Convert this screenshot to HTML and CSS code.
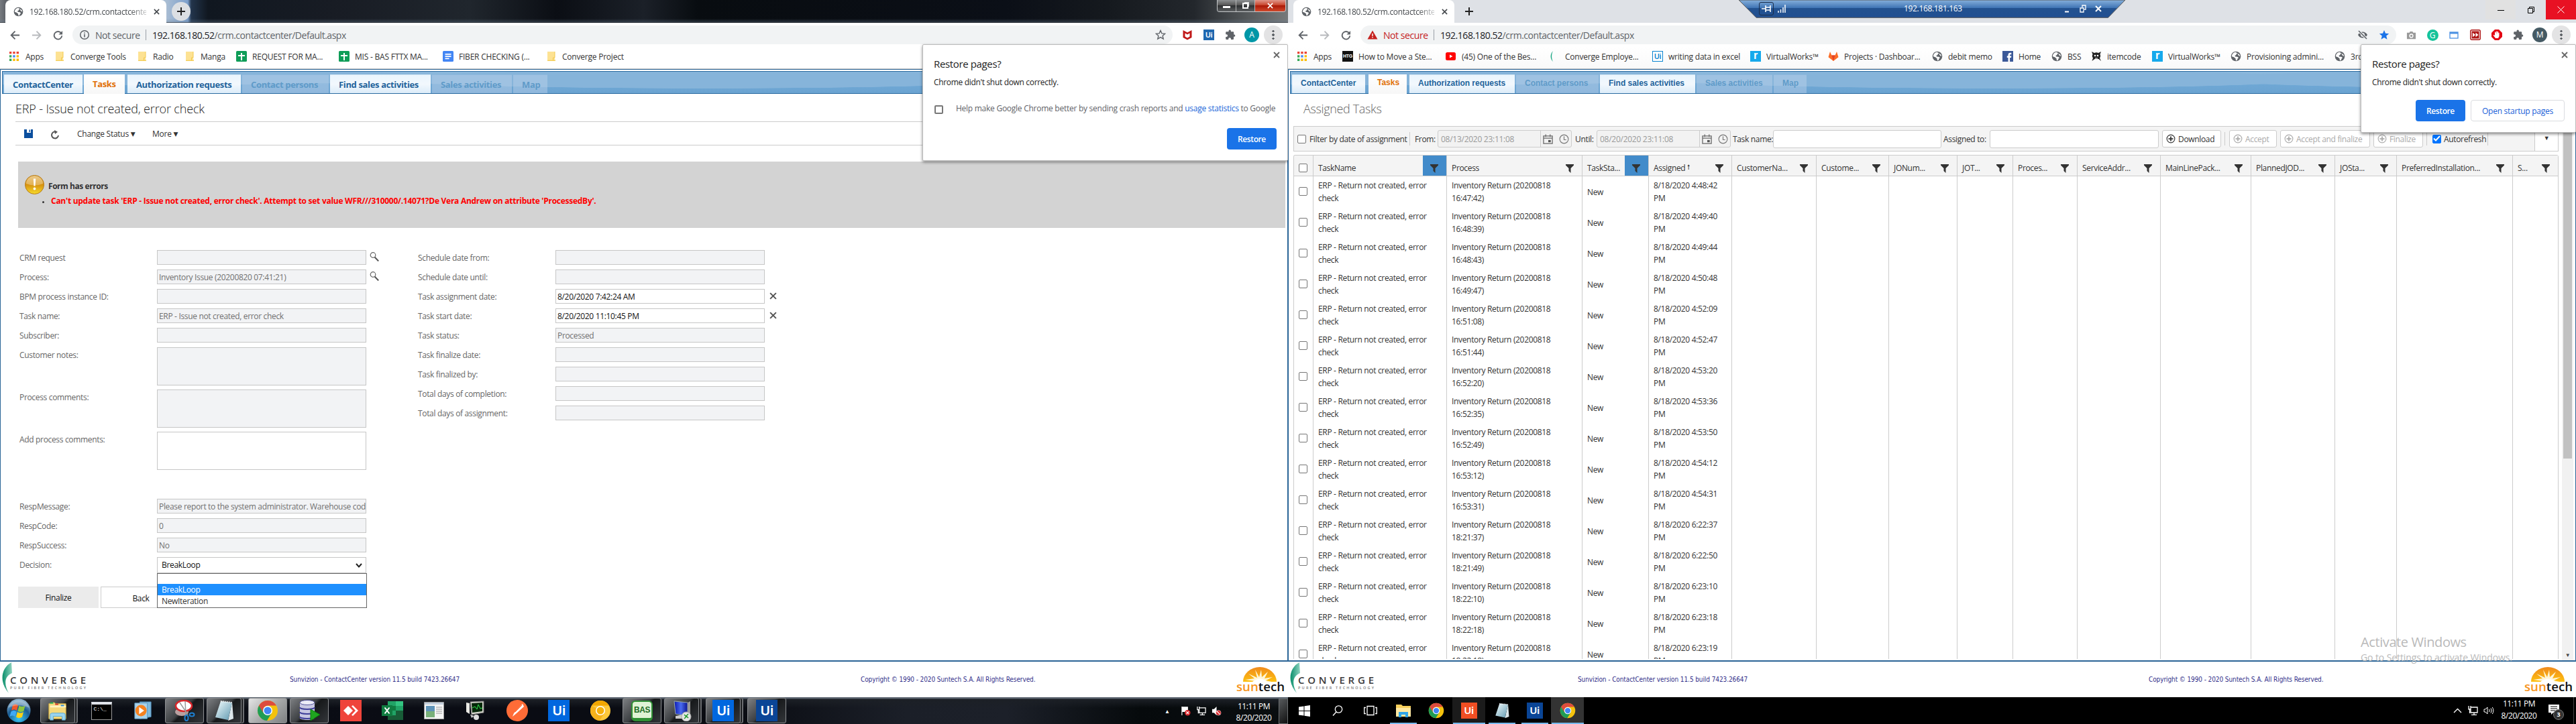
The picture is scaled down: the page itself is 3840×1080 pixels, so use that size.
FILE: index.html
```html
<!DOCTYPE html>
<html lang="en">
<head>
<meta charset="utf-8">
<title>ContactCenter</title>
<link rel="stylesheet" href="styles.css">
</head>
<body>
<svg class="defs" width="0" height="0">
<defs>
<linearGradient id="gsilver" x1="0" y1="0" x2="1" y2="1"><stop offset="0" stop-color="#f4feff"/><stop offset="1" stop-color="#5f98b0"/></linearGradient>
<linearGradient id="gsun" x1="0" y1="0" x2="0" y2="1"><stop offset="0" stop-color="#f08a1c"/><stop offset="1" stop-color="#fdc010"/></linearGradient>
<linearGradient id="gleaf" x1="0" y1="0" x2="1" y2="0"><stop offset="0" stop-color="#0a8f6c"/><stop offset="1" stop-color="#8fd3c0"/></linearGradient>
<radialGradient id="gorb" cx=".5" cy=".85" r=".8"><stop offset="0" stop-color="#37c5f2"/><stop offset=".6" stop-color="#1a5b93"/><stop offset="1" stop-color="#8fb4cf"/></radialGradient>
<linearGradient id="gwarn" x1="0" y1="0" x2="0" y2="1"><stop offset="0" stop-color="#e3b45a"/><stop offset=".5" stop-color="#d7920f"/><stop offset="1" stop-color="#f7dc2c"/></linearGradient>
<linearGradient id="gblue" x1="0" y1="0" x2="1" y2="0"><stop offset="0" stop-color="#0b18b0"/><stop offset=".5" stop-color="#4a6cf0"/><stop offset="1" stop-color="#0a1390"/></linearGradient>
</defs>
<symbol id="globe" viewBox="0 0 16 16"><circle cx="8" cy="8" r="7.3" fill="#5f6368"/><path d="M7.5 1.8C4 2.5 1.900 5 2 8.300l3 .9 2.500 2.100.4 2.700c-.3.400 2 .2 1.900-.3l.6-2 1.600-1.700-1.800-1.300-3-.3-.9-1.500 2-1 .6-1.700 1.600-.6z" fill="#fff"/><path d="M10.500 3.500l3 2.200.5 2.300-1.500-.8-1.500-1.700z" fill="#fff"/></symbol>
<symbol id="back" viewBox="0 0 16 16"><path d="M15 8H2M8 1.800L1.800 8 8 14.200" fill="none" stroke="currentColor" stroke-width="2"/></symbol>
<symbol id="fwd" viewBox="0 0 16 16"><path d="M1 8h13M8 1.800L14.200 8 8 14.200" fill="none" stroke="currentColor" stroke-width="2"/></symbol>
<symbol id="reload" viewBox="0 0 16 16"><path d="M13 4.600A6.200 6.200 0 1 0 14.200 8.800" fill="none" stroke="currentColor" stroke-width="2"/><path d="M15 1v6H9z" fill="currentColor"/></symbol>
<symbol id="info" viewBox="0 0 16 16"><circle cx="8" cy="8" r="6.300" fill="none" stroke="#5f6368" stroke-width="1.500"/><path d="M7.200 7h1.600v4.500H7.200zM7.200 4.400h1.600V6H7.200z" fill="#5f6368"/></symbol>
<symbol id="alert" viewBox="0 0 16 16"><path d="M8 1.500L15.500 14.500H.5z" fill="#c5221f"/><path d="M7.300 6h1.400v4H7.300zM7.300 11h1.400v1.500H7.300z" fill="#fff"/></symbol>
<symbol id="star" viewBox="0 0 16 16"><path d="M8 1.500l1.900 4.400 4.800.4-3.600 3.100 1.100 4.700L8 11.600l-4.200 2.500 1.100-4.700L1.300 6.300l4.800-.4z" fill="none" stroke="#5f6368" stroke-width="1.400"/></symbol>
<symbol id="starf" viewBox="0 0 16 16"><path d="M8 1l2 4.800 5.200.4-4 3.400 1.300 5.100L8 12l-4.500 2.700 1.300-5.100-4-3.400L6 5.800z" fill="#1a73e8"/></symbol>
<symbol id="eye" viewBox="0 0 16 16"><path d="M1 8c3-6 11-6 14 0-3 6-11 6-14 0z" fill="#5f6368"/><circle cx="8" cy="8" r="3" fill="#f1f3f4"/><circle cx="8" cy="8" r="1.600" fill="#5f6368"/><path d="M2 2l12 12" stroke="#f1f3f4" stroke-width="3.500"/><path d="M2 2l12 12" stroke="#5f6368" stroke-width="1.600"/></symbol>
<symbol id="shield" viewBox="0 0 16 16"><path d="M1.500 1L8 4.500 14.500 1v11L8 15.500 1.500 12z" fill="#c01818"/><path d="M4.500 5.500L8 7.500l3.500-2v5L8 12.500l-3.500-2z" fill="#fff"/></symbol>
<symbol id="puzzle" viewBox="0 0 16 16"><path d="M14 7.500h-.8V4.500c0-.8-.6-1.300-1.300-1.300h-3V2.300a1.700 1.700 0 0 0-3.400 0v.9h-3c-.7 0-1.300.5-1.300 1.300v2.700h1a1.900 1.900 0 0 1 0 3.800h-1v2.800c0 .7.600 1.300 1.300 1.300h2.700v-1a1.900 1.900 0 0 1 3.800 0v1h2.700c.7 0 1.300-.6 1.300-1.300v-3h1a1.700 1.700 0 0 0 0-3.300z" fill="#5f6368"/></symbol>
<symbol id="camera" viewBox="0 0 16 16"><path d="M1 4h4l1-2h4l1 2h4v10H1z" fill="#9a9a9a"/><circle cx="8" cy="9" r="3.300" fill="#fff"/><circle cx="8" cy="9" r="1.800" fill="#9a9a9a"/></symbol>
<symbol id="win" viewBox="0 0 16 16"><rect x="2" y="4" width="12" height="9" fill="#fff" stroke="#4a90e2" stroke-width="1.300"/><path d="M2 4h12v2.500H2z" fill="#4a90e2"/></symbol>
<symbol id="ff" viewBox="0 0 16 16"><rect x=".7" y=".7" width="14.600" height="14.600" rx="2" fill="#fff" stroke="#b01818" stroke-width="1.400"/><rect x="2.500" y="2.500" width="11" height="11" fill="#b01818"/><path d="M4 4.800L8 8l-4 3.200zM8.500 4.800l4 3.200-4 3.200z" fill="#fff"/></symbol>
<symbol id="hand" viewBox="0 0 16 16"><path d="M5 0h6l5 5v6l-5 5H5l-5-5V5z" fill="#e30613"/><path d="M5 5.500V9l-1.300-1-1 .8L6 13h4l1.500-3V5l-1.200-.5L10 7V3H8.800v4L8.300 2.500H7.200V7L6.500 3.500H5.300z" fill="#fff"/></symbol>
<symbol id="apps" viewBox="0 0 14 14"><path d="M0 0h3.300v3.300H0zM5.300 0h3.300v3.300H5.300zM10.600 0H14v3.300h-3.400z" fill="#ea4335"/><path d="M0 5.300h3.300v3.300H0z" fill="#34a853"/><path d="M5.300 5.300h3.300v3.300H5.300z" fill="#4285f4"/><path d="M10.600 5.300H14v3.300h-3.400zM10.600 10.600H14V14h-3.400zM5.300 10.600h3.300V14H5.300z" fill="#fbbc04"/><path d="M0 10.600h3.300V14H0z" fill="#34a853"/></symbol>
<symbol id="folder" viewBox="0 0 12 14"><path d="M0 0h11v10l1 4H0z" fill="#fde293"/><path d="M0 13.300h12M11 0v9H8.500v4" stroke="#f1c644" stroke-width=".9" fill="none"/></symbol>
<symbol id="sheet" viewBox="0 0 16 16"><rect width="16" height="16" rx="1.500" fill="#0f9d58"/><path d="M7 3h2v11H7zM3 6h10v2H3z" fill="#fff"/></symbol>
<symbol id="doc" viewBox="0 0 16 16"><rect width="16" height="16" rx="1.500" fill="#4285f4"/><path d="M3.500 4h9v1.700h-9zM3.500 7.300h9V9h-9zM3.500 10.600h6v1.700h-6z" fill="#fff"/></symbol>
<symbol id="yt" viewBox="0 0 16 16"><rect y="2" width="15" height="12" rx="2.500" fill="#f00"/><path d="M6 5.500L10.500 8 6 10.500z" fill="#fff"/></symbol>
<symbol id="leaf" viewBox="0 0 16 16"><path d="M6 0C2 4 1 11 6 16 3.500 11 3.500 5 6 0z" fill="#1ca884"/></symbol>
<symbol id="gitlab" viewBox="0 0 16 16"><path d="M8 15L.5 9.300 3 1l2.400 5.500h5.200L13 1l2.500 8.300z" fill="#fc6d26"/><path d="M8 15l2.600-8.500H5.400z" fill="#e24329"/></symbol>
<symbol id="fb" viewBox="0 0 16 16"><rect width="16" height="16" fill="#3b5998"/><path d="M8.500 16v-6H6.800V7.500h1.700V6c0-2 1.200-3.200 3-3.200h1.800v2.500H12c-.7 0-.9.4-.9 1v1.200h2.200L13 10h-1.900v6z" fill="#fff"/></symbol>
<symbol id="skull" viewBox="0 0 16 16"><path d="M1 1l4 2c2-1 4-1 6 0l4-2-1.500 4c1 2 .8 4-.5 5.500l2 4.500-3.500-3h-6L1.500 15l1.500-4.500C1.500 9 1.500 7 2.500 5z" fill="#222"/><circle cx="6" cy="7" r="1.300" fill="#fff"/><circle cx="10" cy="7" r="1.300" fill="#fff"/><path d="M6 11h4" stroke="#fff"/></symbol>
<symbol id="cal" viewBox="0 0 16 16"><path d="M1 3h14v12H1zM1 6.500h14M4.500 .5v4M11.500 .5v4" fill="none" stroke="#6a6a6a" stroke-width="1.400"/><path d="M8.500 9.500h4v3.500h-4z" fill="#555"/></symbol>
<symbol id="clock" viewBox="0 0 16 16"><circle cx="8" cy="8" r="6.800" fill="none" stroke="#777" stroke-width="1.200"/><path d="M8 3.500V9h3.500" fill="none" stroke="#777" stroke-width="1.200"/></symbol>
<symbol id="plusc" viewBox="0 0 16 16"><circle cx="8" cy="8" r="6.700" fill="none" stroke="currentColor" stroke-width="1.300"/><path d="M8 4v8M4 8h8" stroke="currentColor" stroke-width="2"/></symbol>
<symbol id="mag" viewBox="0 0 14 14"><circle cx="5" cy="4.500" r="3.800" fill="#fff" stroke="#666" stroke-width="1.200"/><path d="M7.500 7.500l5.700 6" stroke="#555" stroke-width="2"/></symbol>
<symbol id="x" viewBox="0 0 10 10"><path d="M1 1l8 8M9 1L1 9" stroke="currentColor" stroke-width="1.800" fill="none"/></symbol>
<symbol id="chrome" viewBox="0 0 32 32"><circle cx="16" cy="16" r="15" fill="#f4c20d"/><path d="M3 8.500A15 15 0 0 0 15 31l7-11.500-6-3.500z" fill="#1f9d55"/><path d="M3 8.500A15 15 0 0 1 29 8.500H16a8 8 0 0 0-6.700 11z" fill="#dd4b3e"/><circle cx="16" cy="16" r="7" fill="#fff"/><circle cx="16" cy="16" r="5.500" fill="#4285f4"/></symbol>
<symbol id="canary" viewBox="0 0 32 32"><circle cx="16" cy="16" r="15" fill="#fdc83a"/><path d="M3 8.500A15 15 0 0 1 29 8.500H16z" fill="#f2a600"/><path d="M3 8.500A15 15 0 0 0 15 31l7-11.500-6-3.500z" fill="#f6b21b"/><circle cx="16" cy="16" r="7" fill="#fff"/><circle cx="16" cy="16" r="5.500" fill="#f5b00a"/></symbol>
<symbol id="orb" viewBox="0 0 36 36"><circle cx="18" cy="18" r="17.500" fill="url(#gorb)"/><path d="M9 10c3-2 5-2 8 0l-2 8c-3-2-5-2-8 0z" fill="#f0592a"/><path d="M18.500 10.500c3 2 6 2 9 0l-2 8c-3 2-6 2-9 0z" fill="#8cc63f"/><path d="M6.500 19.500c3-2 5-2 8 0l-2 7.500c-3-2-5-2-8 0z" fill="#3fa9f5"/><path d="M16 20c3 2 6 2 9 0l-2 7.500c-3 2-6 2-9 0z" fill="#fcd116"/><path d="M2 14a17 17 0 0 1 32 0C24 9 12 9 2 14z" fill="#fff" opacity=".3"/></symbol>
<symbol id="explorer" viewBox="0 0 34 32"><path d="M3 5l8-2 3 2h16v24H3z" fill="#f5d97b" stroke="#c9a43f"/><path d="M5 8h25v3H5z" fill="#fff4c0"/><path d="M5 3h5v2H5z" fill="#1db954"/><path d="M13 5h5v2h-5z" fill="#d9342b"/><path d="M22 7h5v2h-5z" fill="#2b8fe0"/><path d="M5 31V23q0-3 3-3h18q3 0 3 3v8h-5v-6H10v6z" fill="#9ad4f0" stroke="#5aa7cf"/></symbol>
<symbol id="explorer10" viewBox="0 0 24 24"><path d="M1 3h8l2 2h12v16H1z" fill="#f7cf5b"/><path d="M1 8h22v13H1z" fill="#ffe9a2"/><path d="M5 22v-8h14v8h-4v-4H9v4z" fill="#2fa4e7"/></symbol>
<symbol id="media" viewBox="0 0 30 30"><path d="M10 1h18v24l-18 3z" fill="#7fb9dc" stroke="#4c87b3"/><path d="M2 3h20v25H2z" fill="#a9d2ea" stroke="#5c9cc4"/><circle cx="12" cy="15" r="9" fill="#f58220"/><path d="M9 9.500l8 5.500-8 5.500z" fill="#fff"/></symbol>
<symbol id="snip" viewBox="0 0 32 32"><ellipse cx="12" cy="18" rx="10" ry="6" fill="#b9a0a0"/><ellipse cx="15" cy="9" rx="12" ry="8" fill="#fff" stroke="#d7262b" stroke-width="2.500"/><path d="M9 4l12 18M17 2l1 20" stroke="#999" stroke-width="1.500"/><ellipse cx="27" cy="22" rx="3.500" ry="2.500" fill="none" stroke="#1d7fd1" stroke-width="2"/><ellipse cx="19" cy="27" rx="2.500" ry="4" fill="none" stroke="#1d7fd1" stroke-width="2"/></symbol>
<symbol id="note" viewBox="0 0 30 32"><path d="M27 3l2 25-8 3z" fill="#dce6ea"/><path d="M10 2l17 2-6 26L2 26z" fill="url(#gsilver)"/><path d="M10 2l17 2" stroke="#fff" stroke-width="2" stroke-dasharray="1.500 1.500"/></symbol>
<symbol id="db" viewBox="0 0 32 32"><path d="M2 4v23c0 4 22 4 22 0V4z" fill="#c7c7e2"/><ellipse cx="13" cy="4" rx="11" ry="3.500" fill="#ececf8" stroke="#55559c"/><path d="M2 11c0 4 22 4 22 0M2 18c0 4 22 4 22 0M2 25c0 4 22 4 22 0" stroke="#3e3e99" stroke-width="2" fill="none"/><path d="M18 14l14 8-14 9z" fill="#1fa51f" stroke="#0a7a0a"/></symbol>
<symbol id="anydesk" viewBox="0 0 32 32"><path d="M0 0h32v32H0z" fill="#ef443b"/><path d="M12 9l7 7-7 7-7-7z" fill="#fff"/><path d="M17 9.500l2-1.500 8 8-8 8-2-1.500 6-6.500z" fill="#fff"/></symbol>
<symbol id="excel" viewBox="0 0 32 28"><path d="M9 0h23v28H9z" fill="#21a366"/><path d="M9 7h12v7H9z" fill="#107c41"/><path d="M21 0h11v7H21z" fill="#33c481"/><path d="M9 21h23v7H9zM21 14h11v7H21z" fill="#185c37"/><rect y="6" width="16" height="16" fill="#107c41"/><path d="M4.500 9.500l7 9M11.500 9.500l-7 9" stroke="#fff" stroke-width="2"/></symbol>
<symbol id="appwin" viewBox="0 0 30 26"><path d="M.5.500h29v25H.5z" fill="#f4f4f4" stroke="#999"/><path d="M1 1h28v3H1z" fill="#c3cfdd"/><path d="M3 6h13v17H3z" fill="#5f93b8"/><path d="M3 14h13v9H3z" fill="#79b07a"/><path d="M18 8h9M18 11h9M18 14h9M18 17h9" stroke="#999"/></symbol>
<symbol id="mon" viewBox="0 0 32 30"><path d="M8 2l20-1v17l-18 3z" fill="#d9d9d0" stroke="#777"/><path d="M10 4l16-1v13l-15 2z" fill="#06280a"/><path d="M11 11l4-2 3 4 2-7 3 6 3-1" stroke="#2fe04a" fill="none"/><path d="M2 3l5 1v16l-5-3z" fill="#e9e9e4"/><circle cx="17" cy="25" r="4" fill="#ddd"/><path d="M8 21l6 2-4 3z" fill="#ccc"/></symbol>
<symbol id="postman" viewBox="0 0 32 32"><circle cx="16" cy="16" r="16" fill="#ff6c37"/><path d="M24 6l2 4-11 10-6 5 2-5z" fill="#fff"/><path d="M13 18L23 8" stroke="#ff6c37"/></symbol>
<symbol id="rdp" viewBox="0 0 30 32"><path d="M4 2l20 2v20L6 21z" fill="url(#gblue)" stroke="#9aa"/><path d="M24 4l4-2v19l-4 3z" fill="#999"/><path d="M6 24l10-2v6H6z" fill="#ccc"/><circle cx="22" cy="25" r="7" fill="#e5e5e5" stroke="#aaa"/><path d="M19 22l3 3-3 3M25 21l-3 3 3 3" stroke="#1d9b2c" stroke-width="1.500" fill="none"/></symbol>
<symbol id="flag" viewBox="0 0 16 16"><path d="M2 1v14M3 2h8v7H3z" stroke="#fff" stroke-width="1.200" fill="#fff"/><circle cx="11" cy="11" r="4.500" fill="#d9262b"/><path d="M9 9l4 4M13 9l-4 4" stroke="#fff" stroke-width="1.300"/></symbol>
<symbol id="net" viewBox="0 0 16 16"><path d="M5 3h10v8H5zM10 11v3M6 14.300h8M2 1v5h3V1M3.500 6v6" fill="none" stroke="#fff" stroke-width="1.300"/></symbol>
<symbol id="mute" viewBox="0 0 16 16"><path d="M1 5h3l4-4v14l-4-4H1z" fill="#fff"/><circle cx="11" cy="11" r="4" fill="#d9262b" stroke="#fff" stroke-width=".5"/><path d="M8.500 8.500l5 5" stroke="#fff" stroke-width="1.300"/></symbol>
<symbol id="sound" viewBox="0 0 16 16"><path d="M1 6h2l3-3v10l-3-3H1zM8.500 6q1.500 2 0 4M11 4.500q2.500 3.500 0 7M13.300 3q3.200 5 0 10" fill="none" stroke="#fff" stroke-width="1"/></symbol>
</svg>

<main class="desktops">

<section class="desktop left">
  <div class="strip dark">
    <div class="ctab"><svg class="i15"><use href="#globe"/></svg><span class="ctitle">192.168.180.52/crm.contactcente</span><svg class="i9 cx"><use href="#x"/></svg></div>
    <div class="plus round"><svg class="i14" viewBox="0 0 14 14"><path d="M7 1v12M1 7h12" stroke="#222" stroke-width="2"/></svg></div>
    <div class="aero"><i class="mn"><b></b></i><i class="rs"><b></b></i><i class="cl"><svg class="i9"><use href="#x"/></svg></i></div>
  </div>
  <div class="toolbar">
    <span class="tb"><svg class="i15"><use href="#back"/></svg></span><span class="tb dim"><svg class="i15"><use href="#fwd"/></svg></span><span class="tb"><svg class="i15"><use href="#reload"/></svg></span>
    <div class="omni"><svg class="i16"><use href="#info"/></svg><span class="sec">Not secure</span><i class="osep"></i><span class="url"><b>192.168.180.52</b>/crm.contactcenter/Default.aspx</span><span class="oic"><svg class="i16"><use href="#star"/></svg></span></div>
    <span class="tb"><svg class="i16"><use href="#shield"/></svg></span><span class="tb"><i class="ui sm">Ui</i></span><span class="tb"><svg class="i16"><use href="#puzzle"/></svg></span><span class="tb"><i class="av teal">A</i></span><span class="tb"><i class="dots"></i></span>
  </div>
  <div class="marks marks-l">
    <span><svg class="i14"><use href="#apps"/></svg>Apps</span>
    <span><svg class="fold"><use href="#folder"/></svg>Converge Tools</span>
    <span><svg class="fold"><use href="#folder"/></svg>Radio</span>
    <span><svg class="fold"><use href="#folder"/></svg>Manga</span>
    <span><svg class="i16"><use href="#sheet"/></svg>REQUEST FOR MA...</span>
    <span><svg class="i16"><use href="#sheet"/></svg>MIS - BAS FTTX MA...</span>
    <span><svg class="i16"><use href="#doc"/></svg>FIBER CHECKING (...</span>
    <span><svg class="fold"><use href="#folder"/></svg>Converge Project</span>
  </div>

  <div class="frame">
    <nav class="band band-l">
      <a>ContactCenter</a><a class="on">Tasks</a><a>Authorization requests</a><a class="off">Contact persons</a><a>Find sales activities</a><a class="off">Sales activities</a><a class="off">Map</a>
    </nav>
    <div class="content">
      <h1 class="ruled">ERP - Issue not created, error check</h1>
      <div class="actions">
        <svg width="13" height="13" viewBox="0 0 13 13"><path d="M0 0h13v13H0z" fill="#0b4f9e"/><path d="M4 0h6v5H4z" fill="#fff"/><path d="M7.500 .5h1.500v3.500H7.500z" fill="#0b4f9e"/></svg>
        <svg class="rel" width="14" height="14" viewBox="0 0 14 14"><path d="M8 2.500A5 5 0 1 0 12 8" fill="none" stroke="#555" stroke-width="2"/><path d="M6 0l5 2.700L7 6z" fill="#555"/></svg>
        <span class="cs">Change Status <b>▼</b></span><span>More <b>▼</b></span>
      </div>
      <div class="errors">
        <div class="ehead"><svg width="29" height="29" viewBox="0 0 29 29"><circle cx="14.500" cy="14.500" r="14" fill="url(#gwarn)" stroke="#b57a18"/><path d="M2 13a12.500 11.500 0 0 1 25 0q-12 5-25 0z" fill="#fff" opacity=".3"/><path d="M12.800 5.500h3.400l-.7 11h-2z" fill="#fff"/><circle cx="14.500" cy="20.500" r="1.900" fill="#fff"/></svg><b>Form has errors</b></div>
        <ul><li>Can't update task 'ERP - Issue not created, error check'. Attempt to set value WFR///310000/.14071?De Vera Andrew on attribute 'ProcessedBy'.</li></ul>
      </div>
      <div class="form">
        <div class="col">
          <div class="fr"><label>CRM request</label><div class="in"></div><svg class="mag"><use href="#mag"/></svg></div>
          <div class="fr"><label>Process:</label><div class="in">Inventory Issue (20200820 07:41:21)</div><svg class="mag"><use href="#mag"/></svg></div>
          <div class="fr"><label>BPM process instance ID:</label><div class="in"></div></div>
          <div class="fr"><label>Task name:</label><div class="in">ERP - Issue not created, error check</div></div>
          <div class="fr"><label>Subscriber:</label><div class="in"></div></div>
          <div class="fr tall"><label>Customer notes:</label><div class="in"></div></div>
          <div class="fr tall"><label>Process comments:</label><div class="in"></div></div>
          <div class="fr tall last"><label>Add process comments:</label><div class="in w"></div></div>
          <div class="fr"><label>RespMessage:</label><div class="in">Please report to the system administrator. Warehouse cod</div></div>
          <div class="fr"><label>RespCode:</label><div class="in">0</div></div>
          <div class="fr"><label>RespSuccess:</label><div class="in">No</div></div>
          <div class="fr sel"><label>Decision:</label><div class="in w select">BreakLoop<svg width="10" height="7" viewBox="0 0 10 7"><path d="M1 1l4 4.500L9 1" fill="none" stroke="#222" stroke-width="2"/></svg>
            <div class="drop"><p></p><p class="hi">BreakLoop</p><p>NewIteration</p></div></div></div>
          <div class="btns"><span class="fin">Finalize</span><span class="bk">Back</span></div>
        </div>
        <div class="col">
          <div class="fr"><label>Schedule date from:</label><div class="in"></div></div>
          <div class="fr"><label>Schedule date until:</label><div class="in"></div></div>
          <div class="fr"><label>Task assignment date:</label><div class="in w">8/20/2020 7:42:24 AM</div><svg class="del"><use href="#x"/></svg></div>
          <div class="fr"><label>Task start date:</label><div class="in w">8/20/2020 11:10:45 PM</div><svg class="del"><use href="#x"/></svg></div>
          <div class="fr"><label>Task status:</label><div class="in">Processed</div></div>
          <div class="fr"><label>Task finalize date:</label><div class="in"></div></div>
          <div class="fr"><label>Task finalized by:</label><div class="in"></div></div>
          <div class="fr"><label>Total days of completion:</label><div class="in"></div></div>
          <div class="fr"><label>Total days of assignment:</label><div class="in"></div></div>
        </div>
      </div>
    </div>
  </div>

  <footer><svg class="conv" viewBox="0 0 130 50"><path d="M16 1C1 9-3 30 12 47 5 34 5 22 17 17z" fill="url(#gleaf)"/><text x="14" y="33" class="lg1" textLength="113">CONVERGE</text><text x="14" y="41" class="lg2" textLength="113">PURE FIBER TECHNOLOGY</text></svg><span class="f1">Sunvizion - ContactCenter version 11.5 build 7423.26647</span><span class="f2">Copyright © 1990 - 2020 Suntech S.A. All Rights Reserved.</span><svg class="sun" viewBox="0 0 74 42"><path d="M11 23a25 22 0 0 1 50 0z" fill="url(#gsun)"/><path d="M36 23L14 20l14-2-9-7 13 6-3-12 6 11 3-11 1 11 9-8-5 10 12-2-10 5 13 3z" fill="#fff6d8"/><path d="M25 23q11-9 22 0z" fill="#fff"/><text x="1" y="37" class="lg3" textLength="72" lengthAdjust="spacingAndGlyphs"><tspan fill="#f7941d">sun</tspan>tech</text></svg></footer>

  <div class="task7">
    <span><svg class="i36"><use href="#orb"/></svg></span>
    <span class="open multi"><svg class="i32"><use href="#explorer"/></svg></span>
    <span><i class="cmd">C:\_</i></span>
    <span><svg width="28" height="28"><use href="#media"/></svg></span>
    <span class="open"><svg class="i32"><use href="#snip"/></svg></span>
    <span class="open multi"><svg class="i32"><use href="#note"/></svg></span>
    <span class="open act"><svg class="i32"><use href="#chrome"/></svg></span>
    <span class="open"><svg class="i32"><use href="#db"/></svg></span>
    <span><svg class="i32"><use href="#anydesk"/></svg></span>
    <span><svg width="32" height="28"><use href="#excel"/></svg></span>
    <span><svg width="30" height="26"><use href="#appwin"/></svg></span>
    <span><svg width="32" height="30"><use href="#mon"/></svg></span>
    <span><svg class="i32"><use href="#postman"/></svg></span>
    <span><i class="ui">Ui</i></span>
    <span><svg class="i32"><use href="#canary"/></svg></span>
    <span class="open"><i class="bas">BAS</i></span>
    <span class="open multi"><svg class="i32"><use href="#rdp"/></svg></span>
    <span class="open multi"><i class="ui">Ui</i></span>
    <span class="open"><i class="ui navy">Ui</i></span>
    <div class="tray"><i class="up">▲</i><svg class="i15"><use href="#flag"/></svg><svg class="i15"><use href="#net"/></svg><svg class="i15"><use href="#mute"/></svg><p>11:11 PM<br>8/20/2020</p><i class="peek"></i></div>
  </div>

  <div class="popup pl">
    <svg class="px"><use href="#x"/></svg>
    <h2>Restore pages?</h2>
    <p class="msg">Chrome didn't shut down correctly.</p>
    <p class="help"><i class="cb"></i><span>Help make Google Chrome better by sending crash reports and <a>usage statistics</a> to Google</span></p>
    <div class="pb"><button class="prim">Restore</button></div>
  </div>
</section>

<section class="desktop right">
  <div class="strip light">
    <div class="ctab"><svg class="i15"><use href="#globe"/></svg><span class="ctitle">192.168.180.52/crm.contactcente</span><svg class="i9 cx"><use href="#x"/></svg></div>
    <div class="plus"><svg class="i14" viewBox="0 0 14 14"><path d="M7 1v12M1 7h12" stroke="#222" stroke-width="2"/></svg></div>
    <div class="w10"><i class="mn"><svg width="10" height="10"><path d="M0 5.500h10" stroke="#000"/></svg></i><i><svg width="10" height="10"><path d="M.5 2.500h7v7h-7zM2.500 2.500v-2h7v7h-2" fill="none" stroke="#000"/></svg></i><i class="cl"><svg width="11" height="11"><path d="M.5.500l10 10M10.500.500l-10 10" stroke="#fff"/></svg></i></div>
  </div>
  <div class="toolbar">
    <span class="tb"><svg class="i15"><use href="#back"/></svg></span><span class="tb dim"><svg class="i15"><use href="#fwd"/></svg></span><span class="tb"><svg class="i15"><use href="#reload"/></svg></span>
    <div class="omni"><svg class="i16"><use href="#alert"/></svg><span class="sec red">Not secure</span><i class="osep"></i><span class="url"><b>192.168.180.52</b>/crm.contactcenter/Default.aspx</span><span class="oic"><svg class="i16"><use href="#eye"/></svg><svg class="i16"><use href="#starf"/></svg></span></div>
    <span class="tb"><svg class="i15"><use href="#camera"/></svg></span><span class="tb"><i class="av green">G</i></span><span class="tb"><svg class="i16"><use href="#win"/></svg></span><span class="tb"><svg class="i16"><use href="#ff"/></svg></span><span class="tb"><svg class="i16"><use href="#hand"/></svg></span><span class="tb"><svg class="i16"><use href="#puzzle"/></svg></span><span class="tb"><i class="av slate">M</i></span><span class="tb"><i class="dots"></i></span>
  </div>
  <div class="marks marks-r">
    <span><svg class="i14"><use href="#apps"/></svg>Apps</span>
    <span><i class="htg">HTG</i>How to Move a Ste...</span>
    <span><svg class="i16"><use href="#yt"/></svg>(45) One of the Bes...</span>
    <span><svg class="i16"><use href="#leaf"/></svg>Converge Employe...</span>
    <span><i class="ui mk">Ui</i>writing data in excel</span>
    <span><i class="vw">r</i>VirtualWorks™</span>
    <span><svg class="i16"><use href="#gitlab"/></svg>Projects · Dashboar...</span>
    <span><svg class="i16"><use href="#globe"/></svg>debit memo</span>
    <span><svg class="i16"><use href="#fb"/></svg>Home</span>
    <span><svg class="i16"><use href="#globe"/></svg>BSS</span>
    <span><svg class="i16"><use href="#skull"/></svg>itemcode</span>
    <span><i class="vw">r</i>VirtualWorks™</span>
    <span><svg class="i16"><use href="#globe"/></svg>Provisioning admini...</span>
    <span><svg class="i16"><use href="#globe"/></svg>3rd</span>
  </div>

  <div class="frame">
    <nav class="band band-r">
      <a>ContactCenter</a><a class="on">Tasks</a><a>Authorization requests</a><a class="off">Contact persons</a><a>Find sales activities</a><a class="off">Sales activities</a><a class="off">Map</a>
    </nav>
    <div class="scroller">
      <div class="pane">
        <h1>Assigned Tasks</h1>
        <div class="filter">
          <i class="cb r"></i><span class="lb first">Filter by date of assignment</span><i class="vl"></i>
          <span class="lb">From:</span><div class="dt"><span>08/13/2020 23:11:08</span><svg class="i15"><use href="#cal"/></svg><svg class="i15"><use href="#clock"/></svg></div>
          <span class="lb">Until:</span><div class="dt"><span>08/20/2020 23:11:08</span><svg class="i15"><use href="#cal"/></svg><svg class="i15"><use href="#clock"/></svg></div>
          <span class="lb">Task name:</span><div class="tx t1"></div>
          <span class="lb">Assigned to:</span><div class="tx t2"></div>
          <div class="bc c1"><span class="btn b1"><svg class="i14"><use href="#plusc"/></svg>Download</span><i class="vl"></i></div>
          <span class="btn b2 dis"><svg class="i14"><use href="#plusc"/></svg>Accept</span>
          <span class="btn b3 dis"><svg class="i14"><use href="#plusc"/></svg>Accept and finalize</span>
          <div class="bc c2"><span class="btn b4 dis"><svg class="i14"><use href="#plusc"/></svg>Finalize</span><i class="vl"></i></div>
          <i class="cb chk"><svg width="11" height="9" viewBox="0 0 11 9"><path d="M1 4.500l3 3L10 1" fill="none" stroke="#fff" stroke-width="2"/></svg></i>
          <div class="ar"><span class="lb">Autorefresh</span><i class="vl"></i></div>
          <span class="dd">▼</span>
        </div>
        <div class="table">
          <div class="row head"><i><u class="cb r"></u></i><i class="f on">TaskName</i><i class="f">Process</i><i class="f on">TaskSta...</i><i class="f">Assigned <em>🠕</em></i><i class="f">CustomerNa...</i><i class="f">Custome...</i><i class="f">JONum...</i><i class="f">JOT...</i><i class="f">Proces...</i><i class="f">ServiceAddr...</i><i class="f">MainLinePack...</i><i class="f">PlannedJOD...</i><i class="f">JOSta...</i><i class="f">PreferredInstallation...</i><i class="f">S...</i></div>
          <div id="rows" class="rows"></div>
        </div>
      </div>
      <div class="sbar"><i class="thumb"></i><i class="arr">▼</i></div>
    </div>
  </div>

  <footer><svg class="conv" viewBox="0 0 130 50"><path d="M16 1C1 9-3 30 12 47 5 34 5 22 17 17z" fill="url(#gleaf)"/><text x="14" y="33" class="lg1" textLength="113">CONVERGE</text><text x="14" y="41" class="lg2" textLength="113">PURE FIBER TECHNOLOGY</text></svg><span class="f1">Sunvizion - ContactCenter version 11.5 build 7423.26647</span><span class="f2">Copyright © 1990 - 2020 Suntech S.A. All Rights Reserved.</span><svg class="sun" viewBox="0 0 74 42"><path d="M11 23a25 22 0 0 1 50 0z" fill="url(#gsun)"/><path d="M36 23L14 20l14-2-9-7 13 6-3-12 6 11 3-11 1 11 9-8-5 10 12-2-10 5 13 3z" fill="#fff6d8"/><path d="M25 23q11-9 22 0z" fill="#fff"/><text x="1" y="37" class="lg3" textLength="72" lengthAdjust="spacingAndGlyphs"><tspan fill="#f7941d">sun</tspan>tech</text></svg></footer>

  <div class="task10">
    <span><svg width="17" height="17" viewBox="0 0 17 17"><path d="M0 2.400l7.500-1V8H0zM8.500 1.200L17 0v8H8.500zM0 9h7.500v6.600l-7.500-1zM8.500 9H17v8l-8.500-1.200z" fill="#fff"/></svg></span>
    <span><svg width="16" height="16" viewBox="0 0 16 16"><circle cx="9.500" cy="6" r="5.200" fill="none" stroke="#fff" stroke-width="1.300"/><path d="M6 10L1 15.500" stroke="#fff" stroke-width="1.400"/></svg></span>
    <span><svg width="20" height="16" viewBox="0 0 20 16"><path d="M5 1.500h10v13H5zM3 3.500H.7v9H3M17 3.500h2.300v9H17" fill="none" stroke="#fff" stroke-width="1.300"/></svg></span>
    <span class="run"><svg class="i24"><use href="#explorer10"/></svg></span>
    <span><svg class="i24"><use href="#chrome"/></svg></span>
    <span class="run hov"><i class="ui or">Ui</i></span>
    <span class="run"><svg class="i24"><use href="#note"/></svg></span>
    <span class="run"><i class="ui nv">Ui</i></span>
    <span class="run cur"><svg class="i24"><use href="#chrome"/></svg></span>
    <div class="tray10"><svg width="13" height="8" viewBox="0 0 13 8"><path d="M1 7l5.500-5.500L12 7" fill="none" stroke="#fff" stroke-width="1.300"/></svg><svg class="i16"><use href="#net"/></svg><svg class="i16"><use href="#sound"/></svg><p>11:11 PM<br>8/20/2020</p><span class="ntf"><svg width="16" height="15" viewBox="0 0 16 15"><path d="M0 0h16v12H7l-3 3v-3H0z" fill="#fff"/><path d="M3 3h10M3 6h10M3 9h7" stroke="#000"/></svg><b>3</b></span><i class="edge"></i></div>
  </div>

  <div class="rdpbar">
    <svg class="shape" viewBox="0 0 576 27"><defs><linearGradient id="gr" x1="0" y1="0" x2="0" y2="1"><stop offset="0" stop-color="#86b0dc"/><stop offset=".45" stop-color="#3f74b4"/><stop offset=".47" stop-color="#23528f"/><stop offset="1" stop-color="#214f92"/></linearGradient></defs><path d="M0 0h576l-25.500 26.300H26z" fill="url(#gr)" stroke="#555"/></svg>
    <div class="rin"><i class="pin"><svg width="14" height="12" viewBox="0 0 14 12"><path d="M0 6h6M6 1v10M6 4h7M6 8h7M13 1v10" stroke="#fff" stroke-width="1.600"/></svg></i><svg width="12" height="12"><path d="M1 12V9M4.500 12V7M8 12V4M11 12V0" stroke="#fff" stroke-width="1.500"/></svg><span>192.168.181.163</span><svg width="55" height="12"><path d="M0 10.500h6" stroke="#fff" stroke-width="2"/><path d="M23 5h5v6h-5zM26 4V1h5v6h-2" fill="none" stroke="#fff" stroke-width="1.300"/><path d="M46 2l8 8M54 2l-8 8" stroke="#fff" stroke-width="2"/></svg></div>
  </div>

  <div class="popup pr">
    <svg class="px"><use href="#x"/></svg>
    <h2>Restore pages?</h2>
    <p class="msg">Chrome didn't shut down correctly.</p>
    <div class="pb"><button class="prim">Restore</button><button class="sec2">Open startup pages</button></div>
  </div>
  <div class="wm"><p>Activate Windows</p><p>Go to Settings to activate Windows.</p></div>
</section>
</main>
<script src="rows.js"></script>
</body>
</html>
```
FILE: rows.js
```js
const tasks = [
  ["16:47:42", "4:48:42"], ["16:48:39", "4:49:40"], ["16:48:43", "4:49:44"], ["16:49:47", "4:50:48"],
  ["16:51:08", "4:52:09"], ["16:51:44", "4:52:47"], ["16:52:20", "4:53:20"], ["16:52:35", "4:53:36"],
  ["16:52:49", "4:53:50"], ["16:53:12", "4:54:12"], ["16:53:31", "4:54:31"], ["18:21:37", "6:22:37"],
  ["18:21:49", "6:22:50"], ["18:22:10", "6:23:10"], ["18:22:18", "6:23:18"], ["18:22:18", "6:23:19"]
];
document.getElementById("rows").innerHTML = tasks.map(([proc, time]) =>
  `<div class="row"><i><u class="cb r"></u></i><i>ERP - Return not created, error<br>check</i>` +
  `<i>Inventory Return (20200818<br>${proc})</i><i>New</i><i>8/18/2020 ${time}<br>PM</i>${"<i></i>".repeat(11)}</div>`
).join("");
```
FILE: styles.css
```css
*{box-sizing:border-box}
body{margin:0;width:3840px;height:1080px;overflow:hidden;background:#fff;font:12px "Open Sans","Noto Sans",sans-serif;letter-spacing:-.33px;color:#333}
h1,h2,p,ul{margin:0;padding:0}
i,em,u{font-style:normal;text-decoration:none}
.defs{position:absolute}
svg{display:block;flex:none}
.i9{width:9px;height:9px}.i14{width:14px;height:14px}.i15{width:15px;height:15px}.i16{width:16px;height:16px}
.i24{width:24px;height:24px}.i32{width:32px;height:32px}.i36{width:36px;height:36px}
.desktops{display:flex}
.desktop{position:relative;width:1920px;height:1080px;display:flex;flex-direction:column;overflow:hidden}

/* browser chrome */
.strip{height:34px;flex:none;display:flex;align-items:flex-start;padding-left:8px}
.dark{background:linear-gradient(180deg,transparent 28px,rgba(110,130,150,.35) 33px,#06080c 34px),linear-gradient(90deg,#777b80 0,#60646a 8px,#a9bdd3 248px,#7da0cc 280px,#23354c 285px,#101720 310px,#181c24 500px,#20262d 700px,#0b0e14 830px,#1b2028 960px,#080c10 1040px,#0b0f17 1500px,#15191e 1650px,#23272c 1780px,#55595b 1860px,#777a7b 1920px)}
.light{background:#dee1e6}
.ctab{width:240px;height:34px;background:#fff;border-radius:8px 8px 0 0;display:flex;align-items:center;padding-left:12px}
.ctitle{width:174px;margin-left:9px;overflow:hidden;white-space:nowrap;letter-spacing:-.36px;color:#45494d;-webkit-mask:linear-gradient(90deg,#000 150px,transparent 182px)}
.cx{margin-left:11px;color:#45494d}
.plus{width:28px;height:28px;margin:3px 0 0 8px;border-radius:50%;display:flex;align-items:center;justify-content:center}
.round{background:#dcdfe3}
.aero{display:flex;margin-left:auto;margin-right:3px;width:103px;height:18px;border:1px solid #c3c6c8;border-top:0;border-radius:0 0 4px 4px;overflow:hidden}
.aero i{display:flex;align-items:center;justify-content:center;background:linear-gradient(#8d9092,#555 45%,#2f3133 50%,#5c5f61);width:28px;border-right:1px solid #b5b5b5}
.aero .mn b{width:11px;height:3px;background:#fff;margin-top:4px}
.aero .rs b{width:9px;height:9px;border:2px solid #fff;box-shadow:2px -2px 0 -1px #ddd}
.aero .cl{flex:1;border:0;color:#fff;background:linear-gradient(#e0978a,#c8452d 45%,#ab1a08 50%,#d0492c)}
.w10{display:flex;margin-left:auto}
.w10 i{width:45px;height:29px;display:flex;align-items:center;justify-content:center}
.w10 .mn{background:#e1e1e1}
.w10 .cl{background:#e81123;width:45px}
.toolbar{height:36px;flex:none;display:flex;align-items:center;padding:0 6px;background:#fff;color:#5f6368}
.tb{width:32px;height:28px;display:flex;align-items:center;justify-content:center}
.dim{color:#b8babd}
.omni{height:28px;flex:1;margin:0 6px;border-radius:14px;background:#f1f3f4;display:flex;align-items:center;padding:0 10px;font-size:14px;letter-spacing:-.43px}
.sec{width:67px;margin-left:8px;white-space:nowrap}
.red{color:#c5221f}
.osep{width:1px;height:16px;background:#9aa0a6;margin:0 9px 0 8px}
.url{letter-spacing:-.47px}
.url b{font-weight:400;color:#202124}
.oic{margin-left:auto;display:flex;gap:16px}
.ui{width:32px;height:32px;background:#0067df;color:#fff;font:600 20px/32px "Noto Sans",sans-serif;text-align:center;letter-spacing:-.5px}
.ui.navy{background:#0a4596}
.ui.sm{width:16px;height:16px;font-size:11px;line-height:15px;background:#1f68b0}
.ui.mk{width:16px;height:16px;font-size:11px;line-height:13px;background:#fff;color:#0a85d1;border:1px solid #0a85d1}
.ui.or,.ui.nv{width:24px;height:24px;font-size:15px;line-height:23px}
.ui.or{background:#f04e23}.ui.nv{background:#0a4596}
.av{width:22px;height:22px;border-radius:50%;color:#fff;text-align:center;font:12px/22px "Open Sans",sans-serif}
.teal{background:#0097a7}.slate{background:#455a64}
.green{background:#15c39a;width:17px;height:17px;line-height:17px}
.dots{width:28px;height:28px;border-radius:50%;background:radial-gradient(circle 1.8px at 14px 8.500px,#5f6368 90%,transparent),radial-gradient(circle 1.8px at 14px 14px,#5f6368 90%,transparent),radial-gradient(circle 1.8px at 14px 19.500px,#5f6368 90%,transparent),#e3e3e4}
.marks{height:33px;flex:none;display:grid;padding:0 0 4px 14px;border-bottom:1px solid #ccc;letter-spacing:-.22px;white-space:nowrap;overflow:hidden}
.marks span{display:flex;align-items:center;gap:8px;overflow:hidden}
.marks span:first-child{gap:10px}
.fold{width:12px;height:14px;margin-right:2px}
.marks-l{grid-template-columns:69px 123px 71px 75px 153px 155px 156px 200px}
.marks-r{grid-template-columns:67px 154px 154px 154px 146px 116px 155px 105px 73px 59px 91px 117px 155px 200px;background:linear-gradient(#fff,#f9f9f9)}
.htg{width:16px;height:16px;background:#111;color:#fff;font:700 7px/16px "Liberation Sans",sans-serif;text-align:center}
.vw{width:16px;height:16px;background:#16a9ec;color:#fff;font:700 16px/13px "Liberation Sans",sans-serif;text-align:center}

/* application frame */
.frame{height:884px;flex:none;border:1px solid #2a6496;border-bottom-width:2px;background:#fff;padding:2px 0 0 2px;display:flex;flex-direction:column}
.band{height:34px;flex:none;display:grid;padding:4px 0 0 2px;border:1px solid #2b6ba0;border-right:0;white-space:nowrap;background:radial-gradient(ellipse 480px 14px at 1050px 11px,#86b4da 97%,transparent 100%),radial-gradient(ellipse 480px 12px at 170px 8px,#86b4da 97%,transparent 100%),radial-gradient(ellipse 480px 14px at 1850px 11px,#86b4da 97%,transparent 100%),linear-gradient(#8bb8dc 0,#86b4da 50%,#6fa8d5 56%,#6ba3d1 100%)}
.band a{margin-right:2px;height:28px;padding-left:13px;background:linear-gradient(#eaf5fd,#f2f8fd 50%,#dcecf9);border-top:1px solid #cfe3f2;color:#22639b;font-weight:700;line-height:28px}
.band .on{height:29px;background:linear-gradient(#fff,#f7f7f7);color:#e17009;border:0;margin-right:4px}
.band .off{background:rgba(190,210,235,.45);color:#5f9bc9;border-color:#8fb9dd}
.band-l{grid-template-columns:119px 65px 171px 131px 152px 121px 53px;font-size:13px;letter-spacing:-.35px}
.band-r{grid-template-columns:114px 61px 159px 125px 144px 115px 51px;font:12px "Liberation Sans",Arial,sans-serif;letter-spacing:-.02px}
.band-r a{line-height:25px}
.band-r a:first-child{margin-right:5px}

h1{font:300 18px "Open Sans",sans-serif;letter-spacing:-.15px}
.ruled{height:42px;line-height:45px;margin-left:20px;border-bottom:1px solid #ccc;color:#222}
.actions{height:35px;margin-left:20px;border-bottom:1px solid #ccc;display:flex;align-items:center;padding-left:13px;letter-spacing:-.25px}
.actions .rel{margin:3px 26px 0 26px}
.actions .cs{width:112px}
.actions b{font:9px "DejaVu Sans",sans-serif;vertical-align:1px}
.errors{margin:24px 3px 0 24px;height:99px;background:#d3d3d3;padding:20px 0 0 10px}
.ehead{display:flex;gap:6px;align-items:center;height:29px;letter-spacing:-.45px}
.ehead b{padding-top:4px}
.errors ul{padding-left:39px;color:#333;line-height:20px;font-weight:700}
.errors li{color:#f00;letter-spacing:-.27px;white-space:nowrap}
.errors li::marker{color:#333;font-size:9px}
.form{display:flex;margin:33px 0 0 26px}
.col{width:594px}
.fr{display:flex;height:29px;color:#666}
.fr label{width:205px;line-height:24px}
.in{width:312px;height:22px;background:#f2f3f5;border:1px solid #c6c6c6;padding-left:2px;line-height:22px;white-space:nowrap;color:#707070}
.w{background:#fff;color:#111}
.tall{height:63px}.tall .in{height:57px}
.last{height:100px}
.mag{width:14px;height:14px;margin:3px 0 0 5px}
.del{width:11px;height:11px;margin:5px 0 0 7px;color:#555}
.select{position:relative;height:24px;padding:0 5px 0 6px;display:flex;justify-content:space-between;align-items:center}
.drop{position:absolute;left:-1px;top:23px;width:313px;height:52px;background:#fff;border:1px solid #666;color:#333;z-index:2}
.drop p{height:17px;line-height:18px;padding-left:6px}
.drop p:first-child{height:15px}
.drop .hi{background:#1e90ff;color:#fff}
.btns{display:flex;gap:3px;margin:15px 0 0 -2px;color:#111;text-align:center;line-height:33px}
.fin{width:120px;height:32px;background:#ebebeb}
.bk{width:120px;height:32px;border:1px solid #ccc}

.scroller{flex:1;display:flex;min-height:0}
.pane{flex:none;width:1891px;height:843px;margin-right:5px;padding-left:5px;display:flex;flex-direction:column;overflow:hidden}
.pane h1{height:48px;line-height:45px;margin-left:15px;color:#666;letter-spacing:-.35px}
.filter{height:38px;flex:none;display:flex;align-items:center;background:#f4f4f4;border:1px solid #ccc;padding-left:5px;color:#333;white-space:nowrap}
.cb{width:13px;height:13px;border:1px solid #767676;border-radius:2px;background:#fff;display:block;flex:none}
.vl{width:1px;height:20px;background:#ccc;flex:none}
.filter .cb+.lb{margin-left:5px}
.filter .first{width:149px}
.filter .lb{flex:none}
.filter .vl+.lb{width:34px;margin-left:7px}
.dt{width:200px;height:26px;border:1px solid #ccc;border-radius:3px;background:#f2f2f2;display:flex;align-items:center;color:#999;margin-right:5px}
.dt span{width:153px;height:24px;line-height:25px;border-right:1px solid #ccc;padding-left:4px;letter-spacing:-.27px;flex:none}
.dt svg:nth-child(2){margin-left:3px;margin-right:9px}
.dt+.lb{width:32px}
.dt:nth-of-type(2){margin-right:3px}
.dt~.dt+.lb{width:60px}
.tx{height:27px;border:1px solid #ccc;border-radius:3px;background:#fff}
.t1{width:251px;margin-right:3px}.t1+.lb{width:69px}
.t2{width:252px;margin-right:5px}
.btn{height:26px;border:1px solid #ccc;border-radius:3px;background:#fff;display:flex;align-items:center;gap:4px;padding-left:5px;flex:none}
.dis{color:#aaa}
.bc{display:flex;align-items:center;gap:5px}
.c1{margin-right:6px}.c2{margin-right:8px}
.b1{width:88px}.b2{width:71px;margin-right:5px}.b3{width:134px;margin-right:5px}.b4{width:74px}
.chk{background:#0075ff;border-color:#0075ff}
.ar{display:flex;align-items:center;width:139px;padding-left:4px;flex:none}
.ar .lb{width:65px}
.filter .ar .lb{margin:0}
.dd{flex:1;height:36px;background:#fff;border-left:1px solid #ccc;text-align:center;font-size:9px;line-height:34px}
.table{margin-top:5px;border:1px solid #ccc;border-bottom:0;border-right:0;border-radius:3px 3px 0 0;overflow:hidden;flex:1;min-height:0}
.row{display:grid;grid-template-columns:29px 199px 202px 99px 124px 126px 108px 102px 83px 96px 124px 135px 125px 92px 173px 68px;height:46px;line-height:19px}
.row>i{border-right:1px solid #ccc;padding-left:7px;display:flex;align-items:center;white-space:nowrap;overflow:hidden}
.rows .row>i>u{margin-top:-1px}
.head{height:31px;background:#f4f4f4;border-bottom:1px solid #ccc}
.head>i{justify-content:space-between;padding-top:6px}
.head em{margin-right:auto;margin-left:3px;font:10px "DejaVu Sans",sans-serif}
.head .f::after{content:"";width:35px;height:30px;margin-top:-6px;flex:none;background:#333;clip-path:polygon(11px 13px,23px 13px,23px 14.500px,18.500px 19px,18.500px 26px,15.500px 23px,15.500px 19px,11px 14.500px)}
.head .on{background:linear-gradient(#428bca,#428bca) right/35px 100% no-repeat}
.sbar{width:17px;background:#f1f1f1;margin-top:48px;display:flex;flex-direction:column;justify-content:space-between;align-items:center}
.thumb{width:13px;height:496px;background:#c1c1c1}
.arr{font-size:8px;padding-bottom:3px;color:#444}

/* footer */
footer{height:53px;flex:none;display:flex;background:#fff;color:#33308a;font:10px "DejaVu Sans Condensed","DejaVu Sans",sans-serif;letter-spacing:-.1px;line-height:54px;padding-left:1px}
.conv{width:130px;height:50px}
.f1{margin-left:301px;width:851px}
.f2{width:559px}
.sun{width:74px;height:42px;margin-top:7px}
.lg1{font:600 15px "Open Sans",sans-serif;fill:#3a3a3a;letter-spacing:0}
.lg2{font:600 5.5px "Open Sans",sans-serif;fill:#777;letter-spacing:0}
.lg3{font:600 18px "Open Sans",sans-serif;fill:#111;letter-spacing:0}
.cmd{width:31px;height:27px;background:#000;border:1px solid #9a9a9a;border-top:4px solid #dfe3ea;font:8px/14px "Liberation Mono",monospace;letter-spacing:0;padding-left:3px;color:#fff}
.bas{width:32px;height:31px;border-radius:6px;background:#dff3d5;border:2px solid #2f8f35;border-bottom-width:5px;font:700 12px/24px "Liberation Sans",sans-serif;letter-spacing:-.4px;text-align:center;color:#1d6b24}

/* taskbars */
.task7{height:40px;flex:none;display:flex;gap:4px;background:linear-gradient(#5d6670 0,#5d6670 2px,#1c2026 3px,transparent 16px),linear-gradient(90deg,#0b0e15,#0a0c14 600px,#0a0c12 1100px,#1b1f28 1350px,#1c2029 1500px,#060a0c 1700px,#0a0e10);color:#fff}
.task7>span{width:58px;height:40px;display:flex;align-items:center;justify-content:center}
.task7>span:first-child{width:56px}
.task7 .open{border:1px solid #8b8d90;border-radius:3px;height:38px;margin-top:1px;background:linear-gradient(135deg,#7d7f82,#3d4043 45%,#17191b 52%,#33363a)}
.task7 .multi{width:52px;margin-right:6px;box-shadow:3px 0 0 -1px #1a1c1e,4px 0 0 0 #6a6c70}
.task7 .act{background:linear-gradient(135deg,#e5e5e5,#a9abac 50%,#7e8082)}
.tray{margin-left:auto;display:flex;align-items:center;gap:8px}
.up{font-size:8px;margin-right:8px;letter-spacing:0}
.tray p{width:64px;text-align:center;line-height:17px;margin:3px -3px 0 8px;letter-spacing:-.45px}
.peek{width:14px;height:38px;margin-top:2px;border:1px solid #6d7072;background:linear-gradient(135deg,#56595b,#111)}
.task10{height:40px;flex:none;display:flex;background:#000;color:#fff}
.task10>span{width:49px;height:40px;display:flex;align-items:center;justify-content:center}
.run{background:linear-gradient(#76b9ed,#76b9ed) 50% 100%/40px 2px no-repeat}
.hov{background-color:#1b1b1b;background-size:48px 2px}
.cur{background-color:#333;background-size:48px 2px}
.tray10{margin-left:auto;display:flex;align-items:center;gap:8px}
.tray10 p{width:64px;text-align:center;line-height:18px;margin:-2px 0 0 -3px;letter-spacing:-.45px}
.ntf{position:relative;margin:-4px 15px 0 4px}
.ntf b{position:absolute;left:7px;top:7px;width:16px;height:16px;border-radius:50%;background:#333;border:1px solid #777;text-align:center;font-size:9px;line-height:14px}
.edge{width:1px;height:40px;background:#444;margin-right:3px;margin-left:-2px}

/* overlays */
.popup{position:absolute;background:#fff;border:1px solid #bbb;border-radius:2px;box-shadow:0 2px 4px rgba(0,0,0,.45);padding:17px 16px}
.pl{left:1375px;top:66px;width:545px;height:174px}
.pr{left:1599px;top:66px;width:321px;height:132px}
.popup h2{font:400 15px/22px "Open Sans",sans-serif;letter-spacing:-.36px;color:#222}
.px{position:absolute;right:11px;top:10px;width:10px;height:10px;color:#666}
.msg{margin-top:9px;line-height:16px;color:#222}
.help{display:flex;align-items:center;margin-top:20px;height:20px;color:#5f6368;letter-spacing:-.26px;white-space:nowrap}
.help .cb{border:2px solid #777;margin:5px 19px 0 1px}
.help a{color:#1a66d8}
.pb{display:flex;justify-content:flex-end;gap:8px;margin:18px 0 0}
.pl .pb{margin:20px 0 0}
.popup button{height:32px;border-radius:4px;font:600 12px "Open Sans",sans-serif;letter-spacing:-.4px;padding:0;white-space:nowrap}
.prim{width:74px;background:#1a73e8;color:#fff;border:0}
.popup .sec2{width:140px;background:#fff;color:#1a5fd8;border:1px solid #dadce0;font-weight:400;letter-spacing:-.25px}
.rdpbar{position:absolute;left:672px;top:0;width:576px;height:27px;color:#fff}
.shape{position:absolute;width:576px;height:27px}
.rin{position:relative;display:flex;align-items:center;height:25px;padding-left:30px}
.pin{width:22px;height:20px;border:1px solid #1a2d4a;border-radius:3px;display:flex;align-items:center;justify-content:center;margin-right:6px}
.rin span{margin-left:176px;width:240px}
.wm{position:absolute;left:1599px;top:943px;color:#b9b9b9;white-space:nowrap;font-size:20px;letter-spacing:-.4px;line-height:30px}
.wm p+p{font-size:14px;letter-spacing:-.1px;line-height:16px}
```
